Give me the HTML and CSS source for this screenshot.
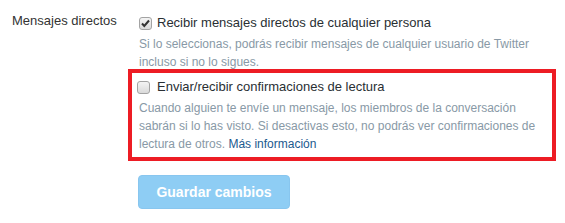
FILE: index.html
```html
<!DOCTYPE html>
<html lang="es">
<head>
    <meta charset="UTF-8">
    <title>Mensajes directos</title>
    <link rel="stylesheet" href="styles.css">
</head>
<body>

<div class="settings-row">
    <div class="settings-label">Mensajes directos</div>
    <div class="settings-controls">
        <div class="option first-option">
            <label class="check-line">
                <span class="check checked">
                    <svg width="11" height="11" viewBox="0 0 11 11"><path d="M2 5.5 L4.3 8 L9 2.5" fill="none" stroke="#333" stroke-width="2"/></svg>
                </span>
                Recibir mensajes directos de cualquier persona
            </label>
            <p class="help">Si lo seleccionas, podrás recibir mensajes de cualquier usuario de Twitter incluso si no lo sigues.</p>
        </div>

        <div class="option marked">
            <label class="check-line">
                <span class="check"></span>
                Enviar/recibir confirmaciones de lectura
            </label>
            <p class="help">Cuando alguien te envíe un mensaje, los miembros de la conversación sabrán si lo has visto. Si desactivas esto, no podrás ver confirmaciones de lectura de otros. <a href="#">Más información</a></p>
        </div>

        <button class="save-button" disabled>Guardar cambios</button>
    </div>
</div>

</body>
</html>
```

FILE: styles.css
```css
body {
    margin: 0;
    font-family: "Liberation Sans", Arial, sans-serif;
    color: #292f33;
    background: #fff;
}

.settings-row {
    display: flex;
    padding-top: 12px;
}

.settings-label {
    width: 116px;
    padding-left: 12px;
    font-size: 13px;
    line-height: 18px;
    color: #333;
}

.settings-controls {
    width: 428px;
    padding-top: 2px;
}

.option {
    padding: 0 4px 0 11px;
}

.option.marked {
    margin-top: -2px;
    border: 4px solid #ed1c24;
    padding: 5px 4px 4px 7px;
}

.check-line {
    display: flex;
    align-items: center;
    font-size: 13px;
    line-height: 18px;
    cursor: pointer;
}

.check {
    width: 11px;
    height: 11px;
    margin-right: 5px;
    border: 1px solid #a3a3a3;
    border-radius: 3px;
    background: linear-gradient(#f4f4f4, #dadada);
    display: flex;
    align-items: center;
    justify-content: center;
}

.marked .check {
    margin-left: -2px;
    margin-right: 7px;
}

.check svg {
    display: block;
}

.help {
    margin: 3px 0 0;
    font-size: 12px;
    line-height: 18px;
    color: #8899a6;
}

.help a {
    color: #1b5a8e;
    text-decoration: none;
}

.save-button {
    margin: 14px 0 0 10px;
    width: 152px;
    height: 34px;
    border: 1px solid #88c6ef;
    border-radius: 4px;
    background: #8ecdf4;
    color: #fff;
    font-family: "Liberation Sans", Arial, sans-serif;
    font-size: 14px;
    font-weight: bold;
}
```
